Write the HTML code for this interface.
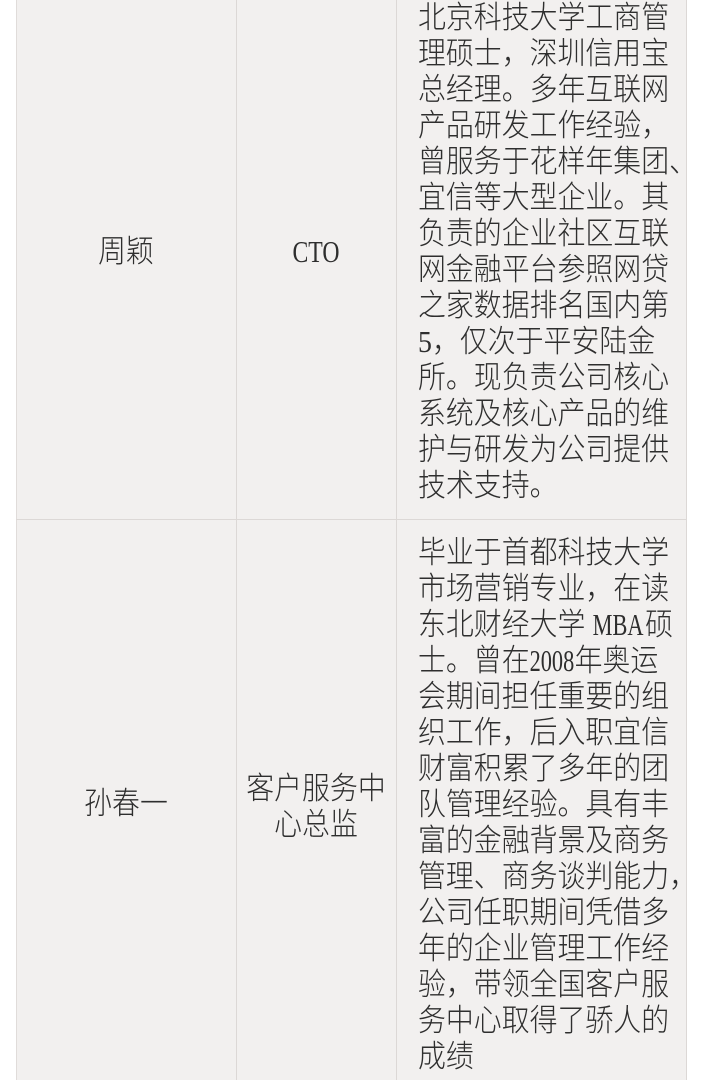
<!DOCTYPE html>
<html><head><meta charset="utf-8"><style>
html,body{margin:0;padding:0;background:#fff;width:702px;height:1080px;overflow:hidden}
body{position:relative;font-family:"Liberation Serif","Noto Sans CJK SC",serif;color:#2e2e2e;font-size:31px;font-weight:300}
.bg{position:absolute;left:16px;top:0;width:669px;height:1080px;background:#f2f0ef;border-left:1px solid #e0dcda;border-right:1px solid #dcd8d6}
.v{position:absolute;top:0;width:1px;height:1080px;background:#dcd8d6}
.h{position:absolute;left:16px;width:670px;height:1px;background:#dcd8d6;top:519px}
.l{position:absolute;left:418px;height:36px;line-height:36px;white-space:nowrap;transform:scaleX(0.9);transform-origin:left center}
.c{position:absolute;height:36px;line-height:36px;white-space:nowrap;transform:translateX(-50%) scaleX(0.9)}
.n{display:inline-block;transform:scaleX(0.8);transform-origin:left center;margin-right:-12px}
</style></head><body>
<div class="bg"></div>
<div class="v" style="left:236px"></div>
<div class="v" style="left:396px"></div>
<div class="h"></div>

<div class="c" style="left:126px;top:234px">周颖</div>
<div class="c" style="left:316px;top:234px"><span style="display:inline-block;transform:scaleX(0.85)">CTO</span></div>
<div class="l" style="top:0px">北京科技大学工商管</div>
<div class="l" style="top:36px">理硕士，深圳信用宝</div>
<div class="l" style="top:72px">总经理。多年互联网</div>
<div class="l" style="top:108px">产品研发工作经验，</div>
<div class="l" style="top:144px">曾服务于花样年集团、</div>
<div class="l" style="top:180px">宜信等大型企业。其</div>
<div class="l" style="top:216px">负责的企业社区互联</div>
<div class="l" style="top:252px">网金融平台参照网贷</div>
<div class="l" style="top:288px">之家数据排名国内第</div>
<div class="l" style="top:324px">5，仅次于平安陆金</div>
<div class="l" style="top:360px">所。现负责公司核心</div>
<div class="l" style="top:396px">系统及核心产品的维</div>
<div class="l" style="top:432px">护与研发为公司提供</div>
<div class="l" style="top:468px">技术支持。</div>

<div class="c" style="left:126px;top:786px">孙春一</div>
<div class="c" style="left:316px;top:771px">客户服务中</div>
<div class="c" style="left:316px;top:807px">心总监</div>
<div class="l" style="top:535px">毕业于首都科技大学</div>
<div class="l" style="top:571px">市场营销专业，在读</div>
<div class="l" style="top:607px">东北财经大学 <span class="n">MBA</span>硕</div>
<div class="l" style="top:643px">士。曾在<span class="n">2008</span>年奥运</div>
<div class="l" style="top:679px">会期间担任重要的组</div>
<div class="l" style="top:715px">织工作，后入职宜信</div>
<div class="l" style="top:751px">财富积累了多年的团</div>
<div class="l" style="top:787px">队管理经验。具有丰</div>
<div class="l" style="top:823px">富的金融背景及商务</div>
<div class="l" style="top:859px">管理、商务谈判能力，</div>
<div class="l" style="top:895px">公司任职期间凭借多</div>
<div class="l" style="top:931px">年的企业管理工作经</div>
<div class="l" style="top:967px">验，带领全国客户服</div>
<div class="l" style="top:1003px">务中心取得了骄人的</div>
<div class="l" style="top:1039px">成绩</div>
</body></html>
